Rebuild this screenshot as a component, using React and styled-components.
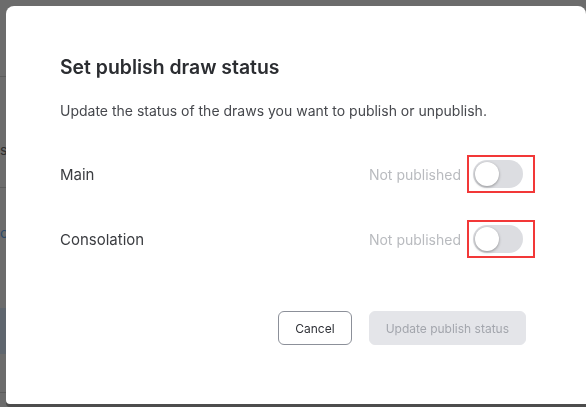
import React from "react";
import styled, { createGlobalStyle } from "styled-components";

const GlobalStyle = createGlobalStyle`
  html, body {
    margin: 0;
    padding: 0;
    height: 100%;
    overflow: hidden;
    background: #6c6c6c;
    font-family: Inter, "Noto Sans", Arial, sans-serif;
  }
`;

const Page = styled.div`
  display: flex;
  flex-direction: column;
  height: 407px;
  background: #6c6c6c;
`;

const PageRow = styled.div`
  height: ${(props) => props.height}px;
  border-bottom: ${(props) => (props.line ? "1px solid #5c5c5c" : "none")};
  background: ${(props) => props.bg || "transparent"};
  display: flex;
  align-items: center;
  padding: ${(props) => props.padTop || 0}px 0 ${(props) => props.padBottom || 0}px;
  font-size: 14px;
  color: ${(props) => props.color || "#2e2e2e"};
  box-sizing: border-box;
`;

const Overlay = styled.div`
  position: fixed;
  inset: 0;
  padding: 6px 0 3px 6px;
  box-sizing: border-box;
  display: flex;
`;

const Modal = styled.div`
  flex: 1;
  background: #fff;
  border-radius: 8px 8px 0 4px;
  padding: 47px 60px 0 54px;
  box-sizing: border-box;
  display: flex;
  flex-direction: column;
  box-shadow: 0 3px 0 #4d4d4d;
`;

const Title = styled.h2`
  margin: 0;
  font-size: 19.4px;
  line-height: 28px;
  font-weight: 600;
  color: #2b2d31;
`;

const Subtitle = styled.p`
  margin: 20px 0 0;
  font-size: 14px;
  line-height: 20px;
  color: #46484d;
`;

const Rows = styled.div`
  margin-top: 33px;
  display: flex;
  flex-direction: column;
  gap: 25px;
`;

const Row = styled.div`
  height: 40px;
  display: flex;
  align-items: center;
  justify-content: space-between;
`;

const Label = styled.span`
  font-size: 15px;
  color: #3a3c40;
`;

const StatusGroup = styled.div`
  display: flex;
  align-items: center;
  gap: 12px;
  margin-right: 3px;
`;

const Status = styled.span`
  font-size: 14px;
  color: #b9bbbf;
`;

const ToggleWrap = styled.div`
  position: relative;
  width: 50px;
  height: 28px;
`;

const Track = styled.div`
  width: 50px;
  height: 28px;
  border-radius: 14px;
  background: #dcdde1;
  display: flex;
  align-items: center;
  padding: 0 2px;
  box-sizing: border-box;
`;

const Knob = styled.div`
  width: 24px;
  height: 24px;
  border-radius: 50%;
  background: #fff;
  box-shadow: 0 1px 3px rgba(0, 0, 0, 0.35);
`;

const Highlight = styled.span`
  position: absolute;
  left: -6px;
  right: -12px;
  top: -5px;
  bottom: -5px;
  border: 2px solid #f23838;
  box-sizing: border-box;
  pointer-events: none;
`;

const Footer = styled.div`
  margin-top: 52px;
  display: flex;
  justify-content: flex-end;
  gap: 17px;
`;

const Button = styled.button`
  height: 34px;
  padding: 0 16px;
  border-radius: 6px;
  font-family: inherit;
  font-size: 12px;
  border: ${(props) => (props.primary ? "1px solid #e4e5e9" : "1px solid #8c9099")};
  background: ${(props) => (props.primary ? "#e4e5e9" : "#fff")};
  color: ${(props) => (props.primary ? "#a3a6ad" : "#2f3137")};
  cursor: ${(props) => (props.primary ? "not-allowed" : "pointer")};
`;

const Toggle = () => (
  <ToggleWrap>
    <Track>
      <Knob />
    </Track>
    <Highlight />
  </ToggleWrap>
);

const draws = ["Main", "Consolation"];

export default function App() {
  return (
    <>
      <GlobalStyle />
      <Page>
        <PageRow height={77} line />
        <PageRow height={111} line padTop={34}>
          si
        </PageRow>
        <PageRow height={120} color="#2b4a6a" padBottom={32}>
          o
        </PageRow>
        <PageRow height={46} bg="#5f666e" />
        <PageRow height={39} line />
      </Page>
      <Overlay>
        <Modal>
          <Title>Set publish draw status</Title>
          <Subtitle>
            Update the status of the draws you want to publish or unpublish.
          </Subtitle>
          <Rows>
            {draws.map((name) => (
              <Row key={name}>
                <Label>{name}</Label>
                <StatusGroup>
                  <Status>Not published</Status>
                  <Toggle />
                </StatusGroup>
              </Row>
            ))}
          </Rows>
          <Footer>
            <Button>Cancel</Button>
            <Button primary disabled>
              Update publish status
            </Button>
          </Footer>
        </Modal>
      </Overlay>
    </>
  );
}
